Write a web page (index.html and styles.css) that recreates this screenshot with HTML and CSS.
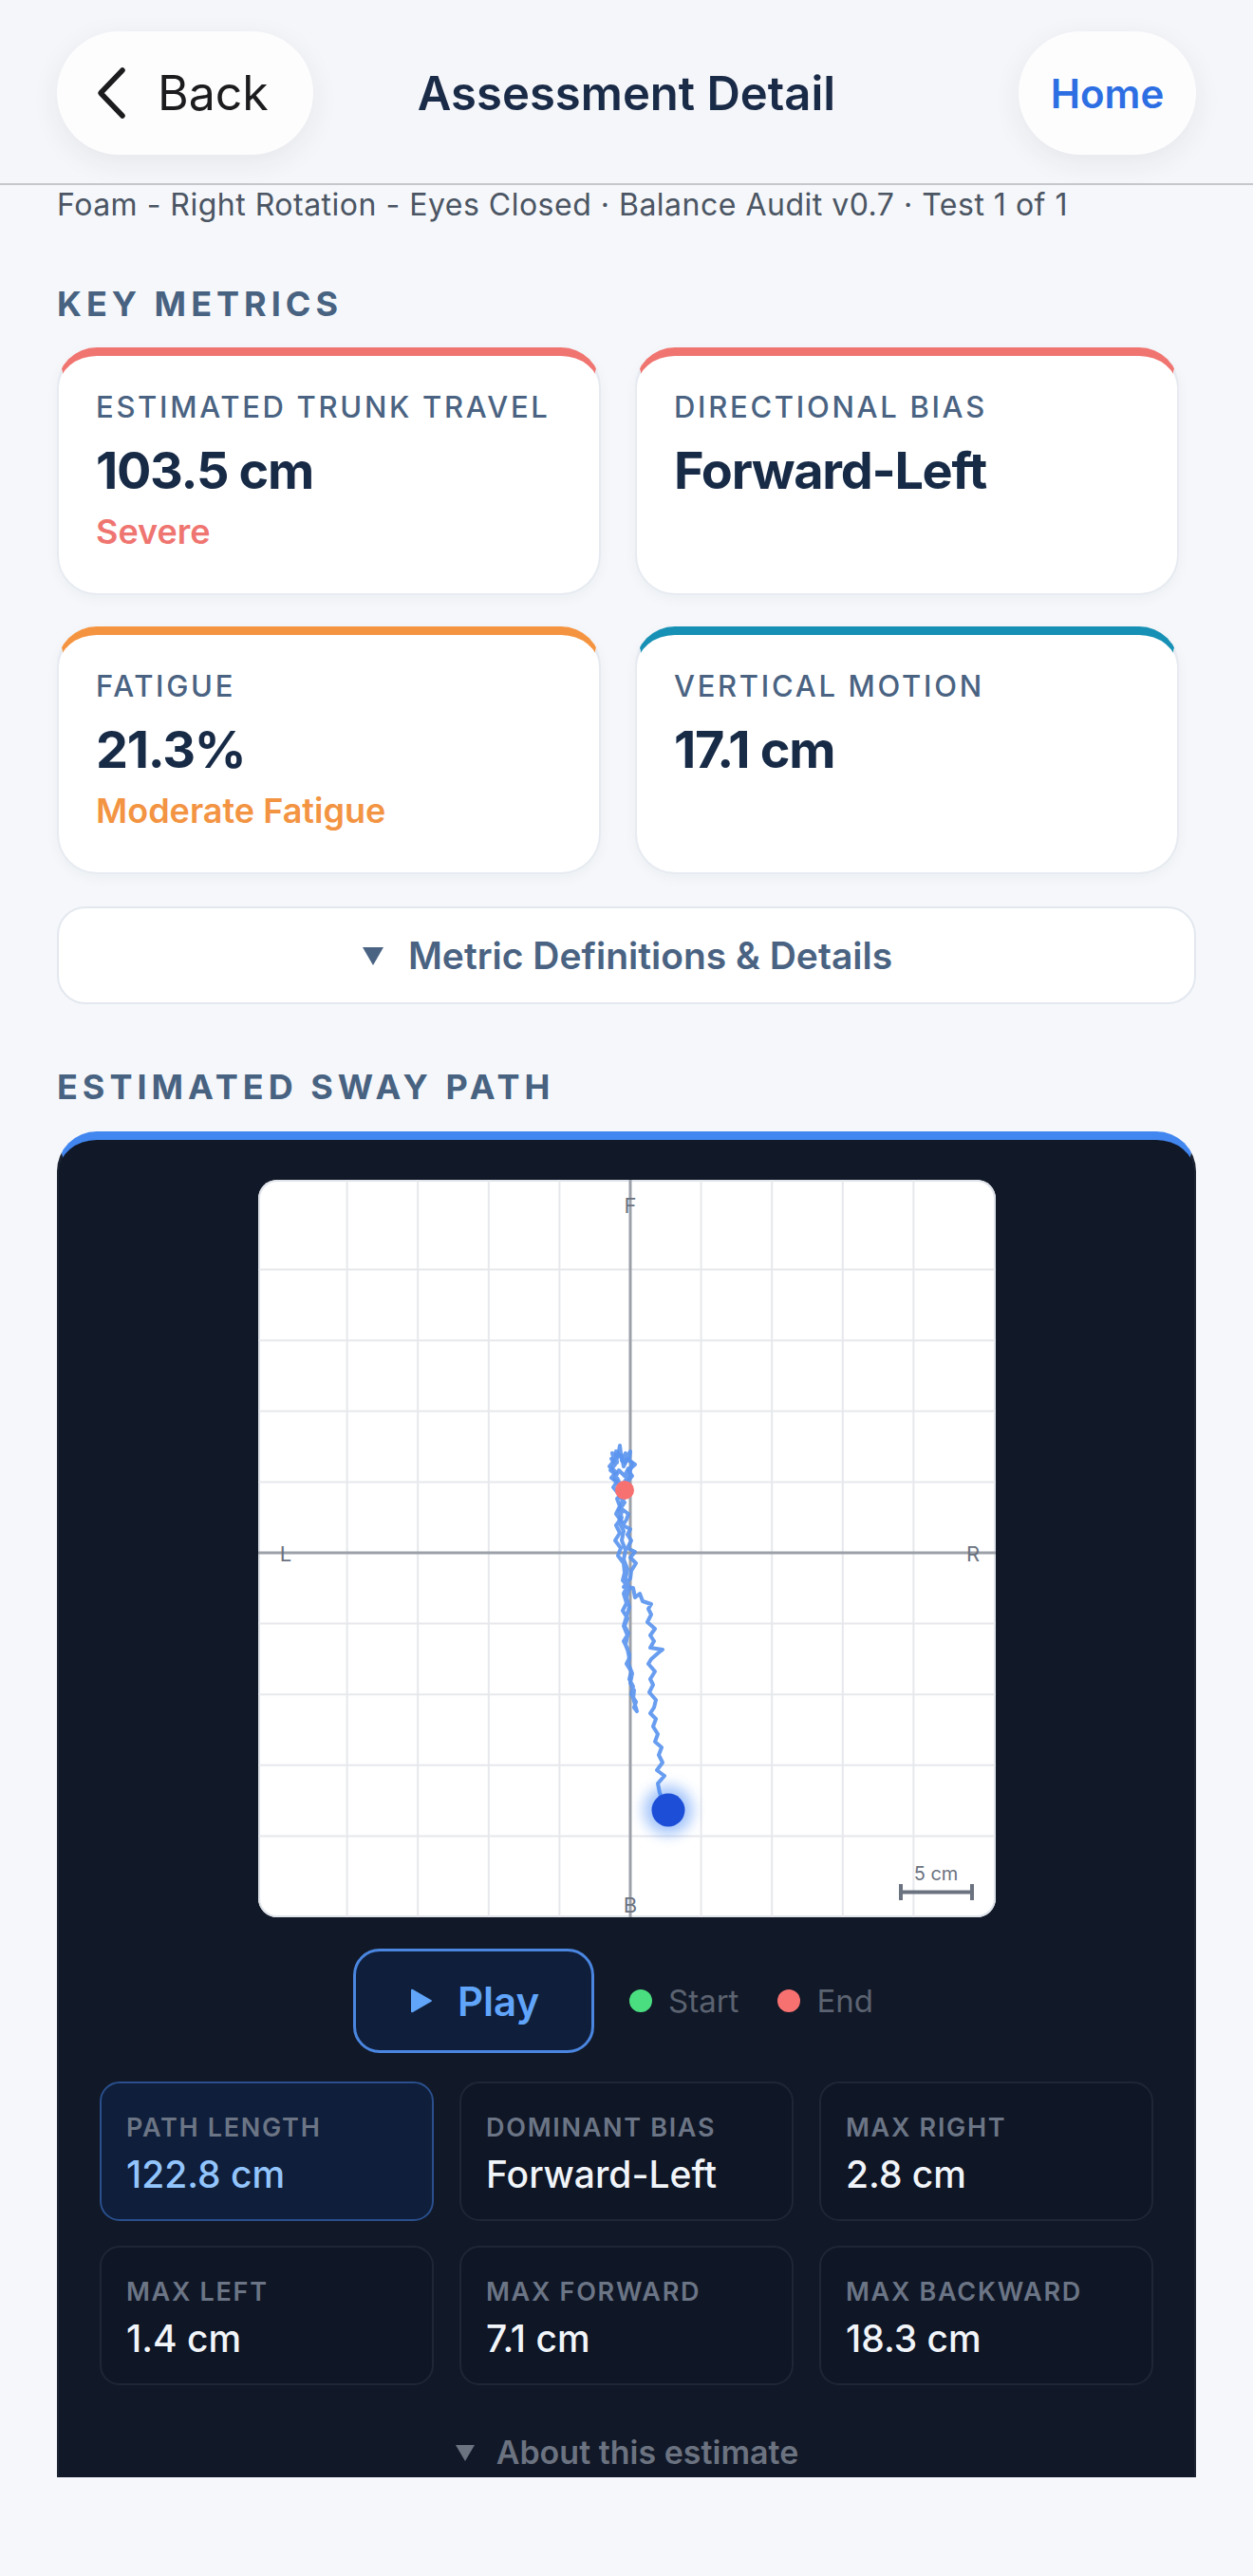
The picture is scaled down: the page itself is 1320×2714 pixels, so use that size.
FILE: index.html
```html
<!DOCTYPE html>
<html lang="en">
<head>
<meta charset="utf-8">
<title>Assessment Detail</title>
<link rel="stylesheet" href="styles.css">
</head>
<body>
<div class="app">
  <header class="topbar">
    <button class="pill back" type="button">
      <svg class="chev" viewBox="0 0 34 56" width="34" height="56"><path d="M29 4 L6 28 L29 52"/></svg>
      <span>Back</span>
    </button>
    <h1 class="title">Assessment Detail</h1>
    <button class="pill home" type="button">Home</button>
  </header>

  <main class="scroll">
    <p class="subtitle">Foam - Right Rotation - Eyes Closed · Balance Audit v0.7 · Test 1 of 1</p>

    <h2 class="section-label">Key Metrics</h2>
    <div class="metrics-grid">
      <div class="metric-card tone-red">
        <div class="metric-label">Estimated Trunk Travel</div>
        <div class="metric-value">103.5 cm</div>
        <div class="metric-sub sub-red">Severe</div>
      </div>
      <div class="metric-card tone-red">
        <div class="metric-label">Directional Bias</div>
        <div class="metric-value">Forward-Left</div>
      </div>
      <div class="metric-card tone-orange">
        <div class="metric-label">Fatigue</div>
        <div class="metric-value">21.3%</div>
        <div class="metric-sub sub-orange">Moderate Fatigue</div>
      </div>
      <div class="metric-card tone-teal">
        <div class="metric-label">Vertical Motion</div>
        <div class="metric-value">17.1 cm</div>
      </div>
    </div>

    <button class="details-btn" type="button">
      <svg class="tri-down" viewBox="0 0 26 24" width="26" height="24"><path d="M2 3 H24 L13 22 Z"/></svg>
      <span>Metric Definitions &amp; Details</span>
    </button>

    <h2 class="section-label sway-label">Estimated Sway Path</h2>
    <section class="sway-card">
      <div class="chart">
        <svg viewBox="0 0 777 777" width="777" height="777">
          <defs>
            <filter id="glow" x="-1" y="-1" width="3" height="3">
              <feGaussianBlur stdDeviation="7"/>
            </filter>
          </defs>
          <g class="grid">
            <line x1="93.6" y1="0" x2="93.6" y2="777"/>
            <line x1="168.2" y1="0" x2="168.2" y2="777"/>
            <line x1="242.8" y1="0" x2="242.8" y2="777"/>
            <line x1="317.4" y1="0" x2="317.4" y2="777"/>
            <line x1="466.6" y1="0" x2="466.6" y2="777"/>
            <line x1="541.2" y1="0" x2="541.2" y2="777"/>
            <line x1="615.8" y1="0" x2="615.8" y2="777"/>
            <line x1="690.4" y1="0" x2="690.4" y2="777"/>
            <line x1="0" y1="94.6" x2="777" y2="94.6"/>
            <line x1="0" y1="169.2" x2="777" y2="169.2"/>
            <line x1="0" y1="243.8" x2="777" y2="243.8"/>
            <line x1="0" y1="318.4" x2="777" y2="318.4"/>
            <line x1="0" y1="467.6" x2="777" y2="467.6"/>
            <line x1="0" y1="542.2" x2="777" y2="542.2"/>
            <line x1="0" y1="616.8" x2="777" y2="616.8"/>
            <line x1="0" y1="691.4" x2="777" y2="691.4"/>
          </g>
          <g class="axis">
            <line x1="392" y1="0" x2="392" y2="777"/>
            <line x1="0" y1="393" x2="777" y2="393"/>
          </g>
          <g class="axis-text">
            <text x="392" y="35" text-anchor="middle">F</text>
            <text x="392" y="772" text-anchor="middle">B</text>
            <text x="29" y="402" text-anchor="middle">L</text>
            <text x="753" y="402" text-anchor="middle">R</text>
            <text class="scale-text" x="714" y="738" text-anchor="middle">5 cm</text>
          </g>
          <path class="scale-bar" d="M677 742 V759 M677 750.5 H752 M752 742 V759"/>
          <polyline class="sway" points="430,660 423,646 421,636 428,628 420,622 426,614 422,606 425,598 418,592 421,584 416,576 419,568 413,562 417,556 419,548 412,540 416,532 413,526 418,518 411,510 414,505 422,498 426,495 413,493 417,486 413,480 418,473 410,466 414,458 411,452 414,447 405,444 402,436 397,440 395,430 385,429 392,420 393,412 398,404 392,398 397,392 389,388 393,380 389,374 392,368 384,364 388,358 390,352 382,346 386,340 381,334 379,330 374,324 378,318 372,314 377,308 370,302 375,296 373,288 379,292 381,280 383,296 387,288 386,298 392,286 391,296 397,300 390,306 394,312 389,318 393,324 386,330 384,340 380,348 383,356 377,364 381,372 376,380 382,388 379,396 385,404 386,414 384,422 389,428 385,436 388,446 384,454 389,462 386,470 390,478 385,486 389,494 391,504 388,510 393,518 391,526 395,534 393,542 398,550 396,556 399,560 395,546 396,538 392,530 394,520 390,510 391,500 387,490 389,480 385,470 388,460 391,450 388,440 391,430 387,420 389,410 385,400 387,390 383,380 385,370 380,360 383,350 382,342 386,334 386,327"/>
          <polyline class="sway" points="386,327 380,318 376,310 371,306 376,300 372,294 378,298 377,286 383,292 385,302 389,294 394,298 391,310 386,318 381,322 375,316 380,306 386,312 390,304 388,322 384,330 378,336 381,344 377,352 383,360"/>
          <circle cx="386" cy="327" r="10" fill="#f87171"/>
          <circle cx="432" cy="664" r="11" fill="#4ade80"/>
          <circle cx="432" cy="664" r="26" fill="#3b82f6" opacity="0.45" filter="url(#glow)"/>
          <circle cx="432" cy="664" r="17.5" fill="#1d4ed8"/>
        </svg>
      </div>

      <div class="controls">
        <button class="play-btn" type="button">
          <svg class="tri-right" viewBox="0 0 26 28" width="26" height="28"><path d="M3 3 Q3 1 5 2 L24 13 Q26 14 24 15 L5 26 Q3 27 3 25 Z"/></svg>
          <span>Play</span>
        </button>
        <div class="legend-item"><span class="dot dot-green"></span><span>Start</span></div>
        <div class="legend-item"><span class="dot dot-red"></span><span>End</span></div>
      </div>

      <div class="stats-grid">
        <div class="stat-card active">
          <div class="stat-label">Path Length</div>
          <div class="stat-value">122.8 cm</div>
        </div>
        <div class="stat-card">
          <div class="stat-label">Dominant Bias</div>
          <div class="stat-value">Forward-Left</div>
        </div>
        <div class="stat-card">
          <div class="stat-label">Max Right</div>
          <div class="stat-value">2.8 cm</div>
        </div>
        <div class="stat-card">
          <div class="stat-label">Max Left</div>
          <div class="stat-value">1.4 cm</div>
        </div>
        <div class="stat-card">
          <div class="stat-label">Max Forward</div>
          <div class="stat-value">7.1 cm</div>
        </div>
        <div class="stat-card">
          <div class="stat-label">Max Backward</div>
          <div class="stat-value">18.3 cm</div>
        </div>
      </div>

      <div class="about">
        <svg class="tri-down small" viewBox="0 0 22 20" width="22" height="20"><path d="M1 2 H21 L11 19 Z"/></svg>
        <span>About this estimate</span>
      </div>
    </section>
  </main>
  <div class="safe-bottom"></div>
</div>
</body>
</html>
```

FILE: styles.css
```css
* {
  box-sizing: border-box;
  margin: 0;
  padding: 0;
}

html,
body {
  background: #f5f7fa;
}

body {
  width: 1320px;
  height: 2714px;
  overflow: hidden;
  font-family: Inter, "Noto Sans", "Liberation Sans", sans-serif;
}

.app {
  display: flex;
  flex-direction: column;
  height: 2714px;
}

/* ---------- header ---------- */
.topbar {
  flex: none;
  height: 195px;
  display: grid;
  grid-template-columns: 1fr auto 1fr;
  align-items: center;
  padding: 3px 60px 0;
  background: #f5f6f9;
  border-bottom: 2px solid #c6c7cc;
}

.pill {
  height: 130px;
  border: none;
  border-radius: 65px;
  background: #fdfdfe;
  box-shadow: 0 8px 30px rgba(30, 40, 60, 0.07);
  font-family: inherit;
  display: flex;
  align-items: center;
  cursor: pointer;
}

.back {
  justify-self: start;
  width: 270px;
  padding-left: 40px;
  gap: 32px;
  font-size: 50px;
  font-weight: 400;
  color: #1c1c1e;
}

.chev path {
  fill: none;
  stroke: #1c1c1e;
  stroke-width: 5.5;
  stroke-linecap: round;
  stroke-linejoin: round;
}

.home {
  justify-self: end;
  width: 187px;
  justify-content: center;
  font-size: 42px;
  font-weight: 600;
  color: #2d6fe3;
}

.title {
  font-size: 49px;
  font-weight: 600;
  color: #1a2b48;
  letter-spacing: 0;
}

/* ---------- scroll area ---------- */
.scroll {
  flex: none;
  height: 2415px;
  overflow: hidden;
  padding: 1px 60px 0;
}

.safe-bottom {
  flex: 1;
}

.subtitle {
  font-size: 32px;
  line-height: 40px;
  letter-spacing: 0.5px;
  color: #4b5563;
}

.section-label {
  margin-top: 62px;
  font-size: 36px;
  line-height: 44px;
  font-weight: 700;
  letter-spacing: 5px;
  text-transform: uppercase;
  color: #486281;
}

.sway-label {
  margin-top: 65px;
}

/* ---------- key metric cards ---------- */
.metrics-grid {
  display: grid;
  grid-template-columns: 1fr 1fr;
  gap: 33px 36px;
  margin: 24px 18px 0 0;
}

.metric-card {
  background: #ffffff;
  border: 2px solid #e7ebf1;
  border-top: 9px solid #f07470;
  border-radius: 42px;
  padding: 35px 39px 44px;
  box-shadow: 0 4px 14px rgba(20, 40, 80, 0.04);
}

.tone-red { border-top-color: #f07470; }
.tone-orange { border-top-color: #f59440; }
.tone-teal { border-top-color: #1690b4; }

.metric-label {
  font-size: 31px;
  line-height: 38px;
  font-weight: 500;
  letter-spacing: 2.7px;
  text-transform: uppercase;
  color: #4a6382;
}

.metric-value {
  margin-top: 16px;
  font-size: 54px;
  line-height: 64px;
  font-weight: 700;
  letter-spacing: -1.3px;
  color: #172a46;
}

.metric-sub {
  margin-top: 11px;
  font-size: 36px;
  line-height: 42px;
  font-weight: 600;
}

.sub-red { color: #ef7571; }
.sub-orange { color: #f39443; }

.details-btn {
  margin-top: 34px;
  width: 100%;
  height: 103px;
  display: flex;
  align-items: center;
  justify-content: center;
  gap: 24px;
  background: #ffffff;
  border: 2px solid #e3e8ef;
  border-radius: 30px;
  font-family: inherit;
  font-size: 39px;
  font-weight: 600;
  color: #4a6382;
}

.tri-down path {
  fill: #4a6382;
}

/* ---------- sway card ---------- */
.sway-card {
  margin-top: 25px;
  background: #111827;
  border: 2px solid #1c2433;
  border-top: 9px solid #4286f0;
  border-radius: 42px;
  padding: 42px 43px 120px;
}

.chart {
  width: 777px;
  height: 777px;
  margin: 0 auto;
  background: #ffffff;
  border-radius: 20px;
  overflow: hidden;
  box-shadow: inset 0 0 0 2px #dfe3ea;
}

.chart svg {
  display: block;
}

.grid line {
  stroke: #e6e8ec;
  stroke-width: 2;
}

.axis line {
  stroke: #9ca0a8;
  stroke-width: 3;
}

.axis-text text {
  font-family: Inter, "Noto Sans", sans-serif;
  font-size: 22px;
  fill: #6b7280;
}

.axis-text .scale-text {
  font-size: 20px;
}

.scale-bar {
  fill: none;
  stroke: #6b7280;
  stroke-width: 4;
}

.sway {
  fill: none;
  stroke: #5b95ef;
  stroke-width: 4;
  stroke-linejoin: round;
  stroke-linecap: round;
  opacity: 0.92;
}

/* controls */
.controls {
  margin-top: 33px;
  height: 110px;
  display: flex;
  align-items: center;
  justify-content: center;
  padding-right: 28px;
}

.play-btn {
  width: 254px;
  height: 110px;
  display: flex;
  align-items: center;
  justify-content: center;
  gap: 26px;
  background: #0f1e3a;
  border: 3px solid #4a86e0;
  border-radius: 28px;
  font-family: inherit;
  font-size: 42px;
  font-weight: 600;
  color: #60a5fa;
  margin-right: 37px;
}

.tri-right path {
  fill: #60a5fa;
}

.legend-item {
  display: flex;
  align-items: center;
  gap: 17px;
  font-size: 33px;
  color: #5b6270;
}

.legend-item + .legend-item {
  margin-left: 41px;
}

.dot {
  width: 24px;
  height: 24px;
  border-radius: 50%;
}

.dot-green { background: #4ade80; }
.dot-red { background: #f87171; }

/* stats */
.stats-grid {
  margin-top: 30px;
  display: grid;
  grid-template-columns: repeat(3, 1fr);
  grid-auto-rows: 147px;
  gap: 26px 27px;
}

.stat-card {
  background: #0f1626;
  border: 2px solid #1f2736;
  border-radius: 21px;
  padding: 30px 26px 0;
}

.stat-card.active {
  background: #0f1e3a;
  border-color: #2a4f8c;
}

.stat-label {
  font-size: 27px;
  line-height: 34px;
  font-weight: 600;
  letter-spacing: 1.7px;
  text-transform: uppercase;
  color: #6b7585;
}

.stat-value {
  margin-top: 9px;
  font-size: 39px;
  line-height: 46px;
  font-weight: 500;
  color: #f1f5f9;
}

.stat-card.active .stat-value {
  color: #93c5fd;
}

.about {
  margin-top: 51px;
  display: flex;
  align-items: center;
  justify-content: center;
  gap: 22px;
  font-size: 34px;
  line-height: 40px;
  font-weight: 600;
  color: #6b7280;
}

.about .tri-down path {
  fill: #6b7280;
}
```
